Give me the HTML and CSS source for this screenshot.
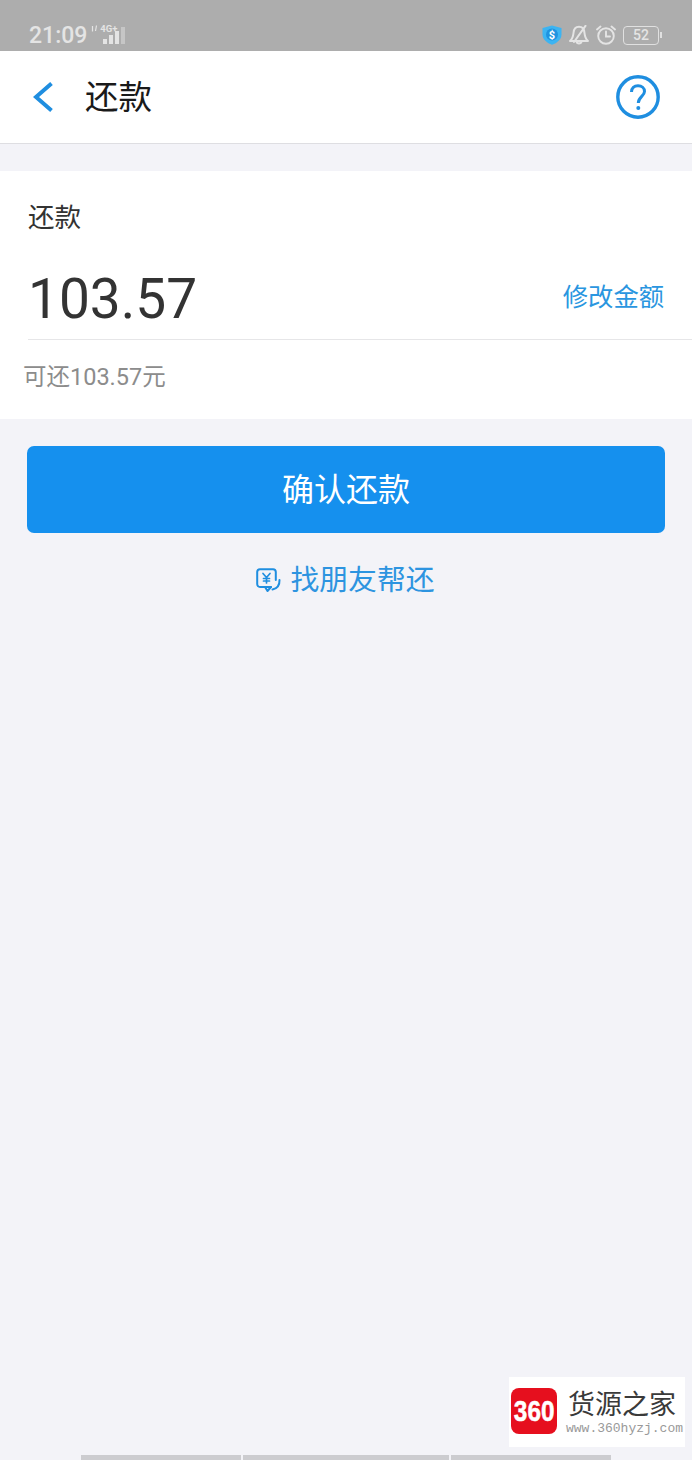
FILE: index.html
```html
<!DOCTYPE html>
<html lang="zh-CN">
  <head>
    <meta charset="utf-8">
    <title>还款</title>
    <link rel="stylesheet" href="styles.css">
  </head>
  <body>
    <div class="statusbar">
      <div class="status-left">
        <span class="time">21:09</span>
        <div class="signal">
          <svg class="arrows" width="7" height="7" viewBox="0 0 7 7" fill="none" stroke="#e4e4e4" stroke-width="1.2">
            <path d="M1.5 6.5 V1 M5.5 0.5 L4.5 6"/>
          </svg>
          <span class="net">4G+</span>
          <svg class="bars" width="25" height="21" viewBox="0 0 25 21">
            <rect x="3" y="14" width="4" height="5" fill="#e4e4e4"/>
            <rect x="9" y="10" width="4" height="9" fill="#e4e4e4"/>
            <rect x="15" y="6" width="4" height="13" fill="#e4e4e4"/>
            <rect x="21" y="2" width="4" height="17" fill="#c6c6c6"/>
          </svg>
        </div>
      </div>
      <div class="status-right">
        <svg width="20" height="20" viewBox="0 0 20 20">
          <path d="M10 0.5 L19.5 3 V9.5 C19.5 14.5 15 18 10 19.8 C5 18 0.5 14.5 0.5 9.5 V3 Z" fill="#3cb4f2"/>
          <circle cx="10" cy="9.5" r="6" fill="#1f93e0"/>
          <text x="10" y="13.5" class="shield-mark">$</text>
        </svg>
        <svg width="20" height="20" viewBox="0 0 20 20" fill="none" stroke="#e4e4e4" stroke-width="2" stroke-linejoin="round" stroke-linecap="round">
          <path d="M1 16 C3.5 14 4.2 11 4.5 8 C4.8 4 7 1.8 10 1.8 C13 1.8 15.2 4 15.5 8 C15.8 11 16.5 14 19 16 Z"/>
          <path d="M7.5 16.5 C8 19 12 19 12.5 16.5"/>
          <path d="M16.5 0.8 L5 17"/>
        </svg>
        <svg width="20" height="20" viewBox="0 0 20 20" fill="none" stroke="#e4e4e4" stroke-width="1.9" stroke-linecap="round">
          <circle cx="10" cy="11" r="7.8"/>
          <path d="M10 6.5 V11.5 H14"/>
          <path d="M1 4.5 L4.5 1.5"/>
          <path d="M19 4.5 L15.5 1.5"/>
        </svg>
        <div class="battery">
          <span class="battery-level">52</span>
        </div>
      </div>
    </div>

    <header class="navbar">
      <div class="nav-left">
        <svg class="back" width="20" height="30" viewBox="0 0 20 30" fill="none" stroke="#1f8ee0" stroke-width="4">
          <path d="M18.5 1.5 L3 15 L18.5 28.5"/>
        </svg>
        <h1 class="nav-title">还款</h1>
      </div>
      <svg width="44" height="44" viewBox="0 0 44 44" fill="none" stroke="#1f8ee0">
        <circle cx="22" cy="22" r="20.2" stroke-width="3.4"/>
        <path d="M15.5 17 C15.5 13 18.2 10.8 22 10.8 C25.8 10.8 28.5 13 28.5 16.5 C28.5 21 22.3 22 22.3 28" stroke-width="3"/>
        <circle cx="22.3" cy="33" r="2" fill="#1f8ee0" stroke="none"/>
      </svg>
    </header>

    <main class="page">
      <section class="card">
        <div class="card-label">还款</div>
        <div class="amount-row">
          <span class="amount">103.57</span>
          <a class="edit-link">修改金额</a>
        </div>
        <div class="available">可还103.57元</div>
      </section>

      <button class="confirm-btn">确认还款</button>

      <a class="friend-link">
        <svg width="25" height="25" viewBox="0 0 25 25" fill="none" stroke="#1f8ee0" stroke-width="2" stroke-linejoin="round" stroke-linecap="round">
          <path d="M15 19 H4 C2.3 19 1.2 17.8 1.2 16 V4 C1.2 2.4 2.3 1.2 4 1.2 H17 C18.7 1.2 19.8 2.4 19.8 4 V12"/>
          <path d="M9 19 L11.5 23 L15 19"/>
          <path d="M23.5 12 C23.7 17 21 20.5 16.5 21.5"/>
          <path d="M7 5.5 L10.5 9.5 L14 5.5 M10.5 9.5 V15 M7.5 10.5 H13.5 M7.5 13 H13.5" stroke-width="1.7"/>
        </svg>
        <span>找朋友帮还</span>
      </a>
    </main>

    <div class="bottom-tabs">
      <div class="tab tab-side"></div>
      <div class="tab tab-mid"></div>
      <div class="tab tab-side"></div>
    </div>

    <div class="watermark">
      <div class="wm-logo"><span class="wm-digits">360</span></div>
      <div class="wm-text">
        <div class="wm-name">货源之家</div>
        <div class="wm-url">www.360hyzj.com</div>
      </div>
    </div>
  </body>
</html>
```

FILE: styles.css
```css
* {
  box-sizing: border-box;
}

body {
  position: relative;
  display: flex;
  flex-direction: column;
  width: 692px;
  height: 1460px;
  margin: 0;
  overflow: hidden;
  color: #333333;
  background: #F3F3F8;
  font-family: Roboto, "Noto Sans CJK SC", sans-serif;
}

.statusbar {
  display: flex;
  justify-content: space-between;
  align-items: flex-end;
  height: 51px;
  padding: 0 33px 6px 29px;
  background: #ADADAD;
}

.status-left {
  display: flex;
  align-items: flex-end;
  margin-bottom: -5px;
}

.time {
  color: #E4E4E4;
  font-size: 23px;
  font-weight: 500;
  line-height: 28px;
}

.signal {
  position: relative;
  width: 38px;
  height: 22px;
  margin-bottom: 6px;
  margin-left: 1px;
}

.arrows {
  position: absolute;
  left: 3px;
  top: 3px;
}

.net {
  position: absolute;
  left: 12px;
  top: 1px;
  color: #E4E4E4;
  font-size: 9.5px;
  font-weight: 700;
  line-height: 12px;
}

.bars {
  position: absolute;
  left: 12px;
  top: 3px;
}

.status-right {
  display: flex;
  align-items: center;
  gap: 7px;
}

.shield-mark {
  fill: #FFFFFF;
  font-size: 11px;
  font-weight: 700;
  text-anchor: middle;
}

.battery {
  position: relative;
  display: flex;
  justify-content: center;
  align-items: center;
  width: 36px;
  height: 19px;
  border: 1.5px solid #E0E0E0;
  border-radius: 4px;
}

.battery:after {
  content: "";
  position: absolute;
  right: -4px;
  top: 5px;
  width: 2px;
  height: 6px;
  background: #E0E0E0;
}

.battery-level {
  color: #E4E4E4;
  font-size: 14px;
  font-weight: 500;
}

.navbar {
  display: flex;
  justify-content: space-between;
  align-items: center;
  height: 93px;
  padding: 0 32px 1px 33px;
  background: #FFFFFF;
  border-bottom: 1px solid #DEDEE2;
}

.nav-left {
  display: flex;
  align-items: center;
  gap: 32px;
}

.nav-title {
  margin: 2px 0 0 0;
  color: #1A1A1A;
  font-size: 33.5px;
  font-weight: 400;
  line-height: 44px;
}

.page {
  flex: 1;
  display: flex;
  flex-direction: column;
  padding-top: 27px;
}

.card {
  height: 248px;
  padding-top: 29px;
  background: #FFFFFF;
}

.card-label {
  padding-left: 28px;
  color: #333333;
  font-size: 26.5px;
  line-height: 36px;
}

.amount-row {
  display: flex;
  justify-content: space-between;
  align-items: center;
  height: 104px;
  margin-left: 28px;
  padding: 23px 28px 0 0;
  border-bottom: 1px solid #E6E6E8;
}

.amount {
  color: #333333;
  font-size: 55px;
  line-height: 66px;
}

.edit-link {
  margin-bottom: 8px;
  color: #2A96E0;
  font-size: 25.3px;
}

.available {
  padding: 19px 0 0 23px;
  color: #8C8C8C;
  font-size: 23.5px;
  line-height: 36px;
}

.confirm-btn {
  display: block;
  width: 638px;
  height: 87px;
  margin: 27px 0 0 27px;
  padding: 0 0 6px 0;
  border: none;
  border-radius: 7px;
  color: #FFFFFF;
  background: #1590EE;
  font-family: inherit;
  font-size: 32px;
}

.friend-link {
  display: flex;
  justify-content: center;
  align-items: center;
  gap: 10px;
  margin-top: 26px;
  padding-right: 2px;
  color: #2D94E0;
  font-size: 28.8px;
  line-height: 42px;
}

.bottom-tabs {
  display: flex;
  justify-content: center;
  gap: 2px;
  height: 5px;
}

.tab {
  background: #CCCCD0;
}

.tab-side {
  width: 160px;
}

.tab-mid {
  width: 206px;
}

.watermark {
  position: absolute;
  left: 509px;
  top: 1377px;
  display: flex;
  width: 176px;
  height: 70px;
  padding: 11px 0 0 2px;
  background: #FFFFFF;
}

.wm-logo {
  display: flex;
  justify-content: center;
  align-items: center;
  width: 46px;
  height: 46px;
  border-radius: 8px;
  color: #FFFFFF;
  background: #E60F1E;
  font-family: "Liberation Sans", sans-serif;
  font-size: 29px;
  font-weight: 700;
}

.wm-digits {
  transform: scaleX(0.84);
  -webkit-text-stroke: 0.5px #FFFFFF;
}

.wm-name {
  margin: -1px 0 -2px 11px;
  color: #3A3A3A;
  font-size: 27px;
  line-height: 36px;
}

.wm-url {
  margin: 0 0 0 9px;
  color: #999999;
  font-family: "Liberation Mono", monospace;
  font-size: 13px;
  line-height: 16px;
  white-space: nowrap;
}
```
